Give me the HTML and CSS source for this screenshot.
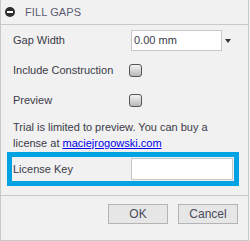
FILE: index.html
```html
<!DOCTYPE html>
<html>
<head>
<meta charset="utf-8">
<link rel="stylesheet" href="styles.css">
</head>
<body>
<div class="dialog">
  <div class="header">
    <span class="collapse"><span class="minus"></span></span>
    <span class="title">FILL GAPS</span>
  </div>
  <div class="content">
    <div class="row">
      <span class="label">Gap Width</span>
      <div class="control">
        <div class="select"><span>0.00 mm</span></div>
        <span class="arrow"></span>
      </div>
    </div>
    <div class="row">
      <span class="label">Include Construction</span>
      <div class="control"><span class="checkbox"></span></div>
    </div>
    <div class="row">
      <span class="label">Preview</span>
      <div class="control"><span class="checkbox"></span></div>
    </div>
    <p class="note">Trial is limited to preview. You can buy a<br>license at <a href="#" class="link">maciejrogowski.com</a></p>
    <div class="license">
      <span class="label">License Key</span>
      <div class="keyinput"></div>
    </div>
  </div>
  <div class="footer">
    <button class="btn">OK</button>
    <button class="btn">Cancel</button>
  </div>
</div>
</body>
</html>
```
FILE: styles.css
```css
html, body {
  margin: 0;
  padding: 0;
  background: #f1f1f1;
}
body {
  font-family: "Liberation Sans", Arial, sans-serif;
  font-size: 11px;
  color: #3a3a48;
}
.dialog {
  width: 249px;
  height: 241px;
  box-sizing: border-box;
  border: 1px solid #c9c9c9;
  border-top: none;
  background: #f1f1f1;
  display: flex;
  flex-direction: column;
}
.header {
  height: 24px;
  border-bottom: 1px solid #c9c9c9;
  display: flex;
  align-items: center;
  padding-left: 4px;
}
.collapse {
  width: 10px;
  height: 10px;
  border-radius: 50%;
  background: #2e2e2e;
  display: flex;
  align-items: center;
  justify-content: center;
  margin-right: 10px;
}
.minus {
  width: 6px;
  height: 2px;
  background: #fff;
}
.title {
  font-size: 11px;
  color: #5c5c72;
  letter-spacing: 0.1px;
}
.content {
  flex: 1;
  display: flex;
  flex-direction: column;
}
.row {
  height: 30px;
  display: grid;
  grid-template-columns: 116px 1fr;
  align-items: center;
  padding-left: 12px;
}
.label {
  white-space: nowrap;
}
.control {
  display: flex;
  align-items: center;
}
.select {
  width: 91px;
  height: 21px;
  box-sizing: border-box;
  margin-left: 2px;
  background: #fff;
  border: 1px solid #c8c8c8;
  display: flex;
  align-items: center;
  padding-left: 2px;
  color: #3a3a48;
}
.arrow {
  margin-left: 3px;
  width: 0;
  height: 0;
  border-left: 3.5px solid transparent;
  border-right: 3.5px solid transparent;
  border-top: 4px solid #333;
  margin-top: 1px;
}
.checkbox {
  width: 13px;
  height: 13px;
  box-sizing: border-box;
  border: 1px solid #555;
  border-radius: 3px;
  background: linear-gradient(#f4f4f4, #b8b8b8);
}
.note {
  margin: 4px 0 0 0;
  padding-left: 12px;
  padding-right: 4px;
  line-height: 16px;
}
.link {
  color: #0000ee;
  text-decoration: underline;
}
.license {
  margin: 1px 0 0 6px;
  width: 232px;
  height: 34px;
  box-sizing: border-box;
  border: 5px solid #03a2e2;
  display: grid;
  grid-template-columns: 118px 102px;
  align-items: center;
  padding-left: 1px;
}
.keyinput {
  width: 102px;
  height: 22px;
  box-sizing: border-box;
  background: #fff;
  border: 1px solid #c8c8c8;
}
.footer {
  height: 36px;
  border-top: 1px solid #c9c9c9;
  display: flex;
  justify-content: flex-end;
  align-items: flex-start;
  gap: 10px;
  padding: 8px 10px 0 0;
}
.btn {
  width: 60px;
  height: 20px;
  box-sizing: border-box;
  border: 1px solid #b4b4b4;
  background: #e6e6e6;
  font-family: "Liberation Sans", Arial, sans-serif;
  font-size: 12px;
  color: #4a4a5a;
  padding: 0;
}
```
